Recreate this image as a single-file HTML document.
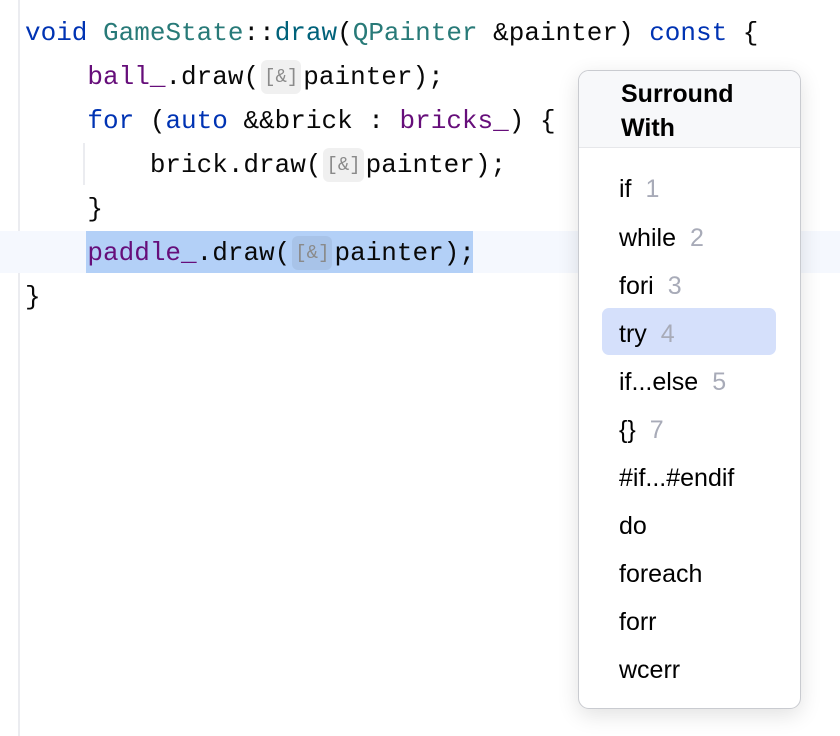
<!DOCTYPE html>
<html><head><style>
body{margin:0;width:840px;height:736px;background:#fff;position:relative;overflow:hidden;font-family:"Liberation Mono",monospace;}
.gut{position:absolute;left:18px;top:0;width:2px;height:736px;background:#ebecf0;}
.cur{position:absolute;left:0;top:231px;width:840px;height:42px;background:#f5f8fe;}
.sel{position:absolute;left:86px;top:231px;width:387px;height:42px;background:#b3d0f7;}
.ln{position:absolute;left:25px;height:44px;line-height:44px;font-size:26px;color:#080808;white-space:pre;letter-spacing:-0.0px}
.k{color:#0033b3}.t{color:#287a78}.f{color:#00627a}.m{color:#660e7a}
.h{display:inline-block;font-size:19px;color:#8a8a8a;background:rgba(0,0,0,0.06);border-radius:6px;padding:0 3px;height:34px;line-height:34px;vertical-align:middle;margin:0 2px 0 2px;letter-spacing:0}
.ind{position:absolute;left:83px;top:143px;width:2px;height:42px;background:#ebecf0;}
.pop{position:absolute;left:578px;top:70px;width:221px;height:637px;border:1px solid #c9cbd0;border-radius:11px;background:#fff;box-shadow:0 6px 22px rgba(0,0,0,0.12);overflow:hidden;font-family:"Liberation Sans",sans-serif;}
.hd{background:#f7f8fa;height:77px;border-bottom:1px solid #e6e7ea;padding:6px 0 0 42px;box-sizing:border-box;font-weight:bold;font-size:25px;line-height:34px;color:#000}
.it{position:absolute;left:40px;font-size:25px;color:#000;height:48px;line-height:48px}
.it span{color:#a8abb8;margin-left:14px}
.hl{position:absolute;left:23px;top:237px;width:174px;height:47px;background:#d5e0fb;border-radius:7px}
</style></head><body>
<div class="gut"></div>
<div class="cur"></div>
<div class="sel"></div>
<div class="ind"></div>
<div class="ln" style="top:11px"><span class="k">void</span> <span class="t">GameState</span>::<span class="f">draw</span>(<span class="t">QPainter</span> &amp;painter) <span class="k">const</span> {</div>
<div class="ln" style="top:55px">    <span class="m">ball_</span>.draw(<span class="h">[&amp;]</span>painter);</div>
<div class="ln" style="top:99px">    <span class="k">for</span> (<span class="k">auto</span> &amp;&amp;brick : <span class="m">bricks_</span>) {</div>
<div class="ln" style="top:143px">        brick.draw(<span class="h">[&amp;]</span>painter);</div>
<div class="ln" style="top:187px">    }</div>
<div class="ln" style="top:231px">    <span class="m">paddle_</span>.draw(<span class="h">[&amp;]</span>painter);</div>
<div class="ln" style="top:275px">}</div>
<div class="pop">
<div class="hd">Surround<br>With</div>
<div class="hl"></div>
<div class="it" style="top:94px">if<span>1</span></div>
<div class="it" style="top:143px">while<span>2</span></div>
<div class="it" style="top:191px">fori<span>3</span></div>
<div class="it" style="top:239px">try<span>4</span></div>
<div class="it" style="top:287px">if...else<span>5</span></div>
<div class="it" style="top:335px">{}<span>7</span></div>
<div class="it" style="top:383px">#if...#endif</div>
<div class="it" style="top:431px">do</div>
<div class="it" style="top:479px">foreach</div>
<div class="it" style="top:527px">forr</div>
<div class="it" style="top:575px">wcerr</div>
</div>
</body></html>
